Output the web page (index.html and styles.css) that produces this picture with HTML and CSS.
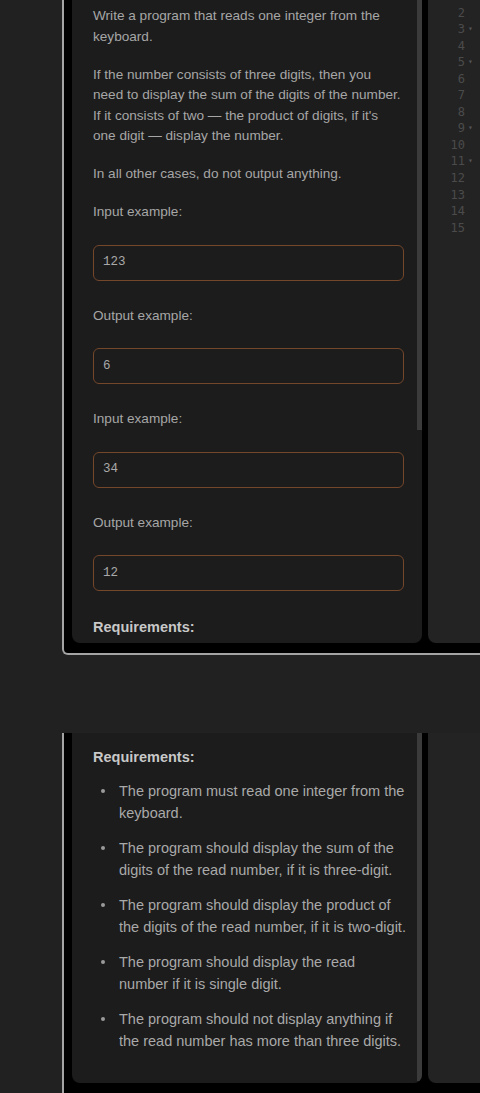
FILE: index.html
```html
<!DOCTYPE html>
<html lang="en">
<head>
<meta charset="utf-8">
<title>Task</title>
<link rel="stylesheet" href="styles.css">
</head>
<body>
<div class="shot shot-top">
  <div class="task">
    <div class="task-body">
      <p>Write a program that reads one integer from the keyboard.</p>
      <p>If the number consists of three digits, then you need to display the sum of the digits of the number. If it consists of two — the product of digits, if it's one digit — display the number.</p>
      <p>In all other cases, do not output anything.</p>
      <p class="label">Input example:</p>
      <div class="sample">123</div>
      <p class="label">Output example:</p>
      <div class="sample">6</div>
      <p class="label">Input example:</p>
      <div class="sample">34</div>
      <p class="label">Output example:</p>
      <div class="sample">12</div>
      <h3 class="req-title">Requirements:</h3>
    </div>
    <div class="scrollbar"><div class="thumb thumb-top"></div></div>
  </div>
  <div class="code">
    <ol class="gutter">
      <li>1</li>
      <li>2</li>
      <li class="fold">3</li>
      <li>4</li>
      <li class="fold">5</li>
      <li>6</li>
      <li>7</li>
      <li>8</li>
      <li class="fold">9</li>
      <li>10</li>
      <li class="fold">11</li>
      <li>12</li>
      <li>13</li>
      <li>14</li>
      <li>15</li>
    </ol>
  </div>
</div>

<div class="shot shot-bottom">
  <div class="task">
    <div class="task-body body-req">
      <h3 class="req-title">Requirements:</h3>
      <ul class="req-list">
        <li>The program must read one integer from the keyboard.</li>
        <li>The program should display the sum of the digits of the read number, if it is three-digit.</li>
        <li>The program should display the product of the digits of the read number, if it is two-digit.</li>
        <li>The program should display the read number if it is single digit.</li>
        <li>The program should not display anything if the read number has more than three digits.</li>
      </ul>
    </div>
    <div class="scrollbar"><div class="thumb thumb-bottom"></div></div>
  </div>
  <div class="code"></div>
</div>
</body>
</html>
```
FILE: styles.css
```css
html, body {
  margin: 0;
  padding: 0;
}
body {
  background: #212121;
  width: 480px;
  height: 1093px;
  overflow: hidden;
  font-family: "Liberation Sans", Arial, sans-serif;
}

.shot {
  margin-left: 62px;
  background: #000;
  border-left: 2px solid #a4a4a4;
  display: flex;
  gap: 6px;
  padding-left: 8px;
  padding-bottom: 10px;
  box-sizing: border-box;
  overflow: hidden;
}
.shot-top {
  height: 655px;
  border-bottom: 2px solid #a4a4a4;
  border-bottom-left-radius: 6px;
}
.shot-bottom {
  margin-top: 78px;
  height: 360px;
}

.task {
  width: 350px;
  flex: none;
  background: #1c1c1c;
  border-radius: 0 0 8px 8px;
  display: flex;
  overflow: hidden;
}
.task-body {
  flex: 1;
  padding: 6px 13px 0 21px;
  color: #a6a6a6;
  font-size: 13.6px;
  line-height: 20.5px;
}
.task-body p {
  margin: 0 0 17.5px;
}
.task-body p.label {
  margin-bottom: 22px;
}
.sample {
  height: 36px;
  box-sizing: border-box;
  border: 1px solid #74462a;
  border-radius: 6px;
  padding: 0 9px;
  display: flex;
  align-items: center;
  font-family: "Liberation Mono", "DejaVu Sans Mono", monospace;
  font-size: 12.5px;
  color: #a9a9a9;
  margin-bottom: 25px;
}
.req-title {
  margin: 26px 0 0;
  font-size: 14.5px;
  line-height: 20px;
  font-weight: bold;
  color: #c8c8c8;
}

.body-req {
  padding: 14px 10px 0 21px;
}
.body-req .req-title {
  margin: 0 0 13px;
}
.req-list {
  list-style: none;
  margin: 0;
  padding: 0;
  font-size: 14.5px;
  line-height: 22px;
  color: #a9a9a9;
}
.req-list li {
  display: flex;
  margin-bottom: 13px;
}
.req-list li::before {
  content: "";
  flex: none;
  width: 4px;
  height: 4px;
  border-radius: 50%;
  background: #9a9a9a;
  margin: 9px 14px 0 8px;
}

.scrollbar {
  width: 5px;
  flex: none;
  display: flex;
  flex-direction: column;
}
.thumb {
  background: #3b3b3b;
}
.thumb-top {
  height: 430px;
}
.thumb-bottom {
  height: 348px;
}

.code {
  flex: 1;
  background: #232323;
  border-bottom-left-radius: 8px;
  overflow: hidden;
}
.gutter {
  list-style: none;
  margin: -12px 0 0;
  padding: 0 15px 0 0;
  text-align: right;
  font-family: "DejaVu Sans Mono", monospace;
  font-size: 12px;
  line-height: 16.55px;
  color: #4b4b4b;
}
.gutter li {
  position: relative;
}
.gutter li.fold::after {
  content: "▾";
  position: absolute;
  left: 100%;
  margin-left: 3px;
  font-size: 8px;
  color: #555;
}
```
